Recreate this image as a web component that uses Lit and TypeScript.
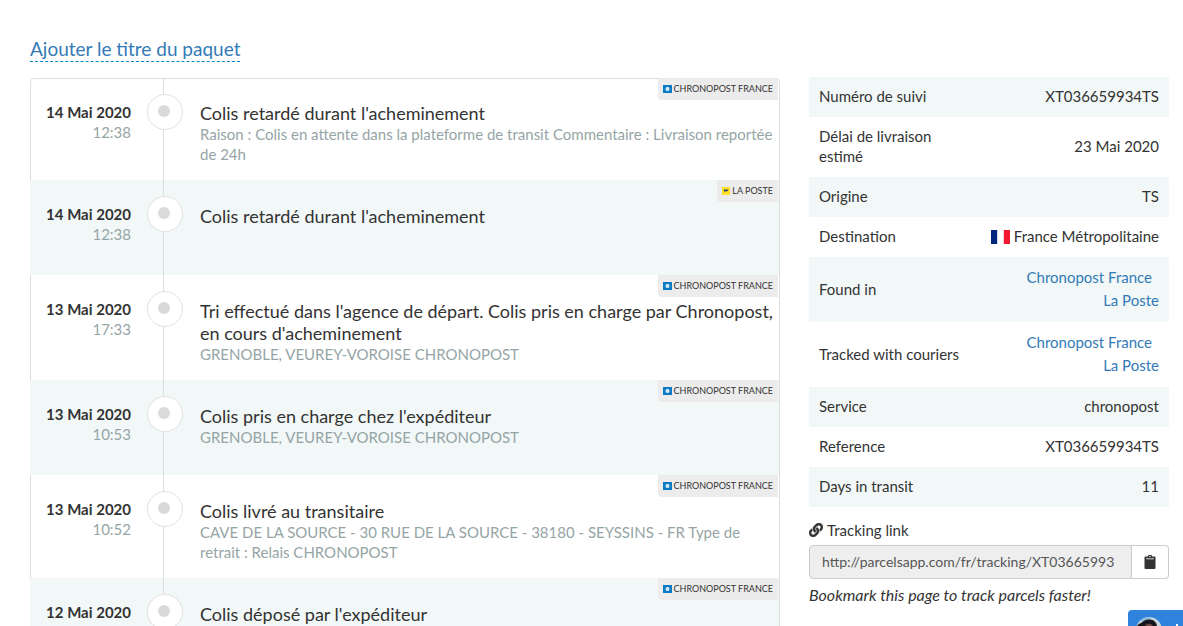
import { LitElement, html, css, svg, nothing } from "lit";
import { customElement } from "lit/decorators.js";

type Carrier = "chronopost" | "laposte";

interface TrackingEvent {
  date: string;
  time: string;
  title: string;
  detail?: string;
  carrier: Carrier;
}

const EVENTS: TrackingEvent[] = [
  {
    date: "14 Mai 2020",
    time: "12:38",
    title: "Colis retardé durant l'acheminement",
    detail:
      "Raison : Colis en attente dans la plateforme de transit Commentaire : Livraison reportée de 24h",
    carrier: "chronopost",
  },
  { date: "14 Mai 2020", time: "12:38", title: "Colis retardé durant l'acheminement", carrier: "laposte" },
  {
    date: "13 Mai 2020",
    time: "17:33",
    title: "Tri effectué dans l'agence de départ. Colis pris en charge par Chronopost, en cours d'acheminement",
    detail: "GRENOBLE, VEUREY-VOROISE CHRONOPOST",
    carrier: "chronopost",
  },
  {
    date: "13 Mai 2020",
    time: "10:53",
    title: "Colis pris en charge chez l'expéditeur",
    detail: "GRENOBLE, VEUREY-VOROISE CHRONOPOST",
    carrier: "chronopost",
  },
  {
    date: "13 Mai 2020",
    time: "10:52",
    title: "Colis livré au transitaire",
    detail: "CAVE DE LA SOURCE - 30 RUE DE LA SOURCE - 38180 - SEYSSINS - FR Type de retrait : Relais CHRONOPOST",
    carrier: "chronopost",
  },
  { date: "12 Mai 2020", time: "", title: "Colis déposé par l'expéditeur", carrier: "chronopost" },
];

const CARRIER_NAMES: Record<Carrier, string> = {
  chronopost: "CHRONOPOST FRANCE",
  laposte: "LA POSTE",
};

const carrierIcon = (carrier: Carrier) =>
  carrier === "chronopost"
    ? html`<svg class="logo" width="9" height="8" viewBox="0 0 9 8" aria-hidden="true">
        <path fill="#0a7ac6" d="M0 0h9v8H0z" />
        <circle cx="4.5" cy="4" r="2" fill="#fff" />
        <path d="M3.2 3.4l1.3.7 1.3-.7M4.5 4.1v1.4" stroke="#6fb2e0" stroke-width=".6" fill="none" />
      </svg>`
    : html`<svg class="logo" width="8" height="8" viewBox="0 0 8 8" aria-hidden="true">
        <path fill="#ffe227" d="M0 0h8v8H0z" />
        <path fill="#2b4a6b" d="M1.8 2.6h4.9L5.4 4.3H3.9L1.6 5.6l1.2-1.5h-.9z" />
      </svg>`;

const marker = html`<svg class="marker" width="36" height="36" viewBox="0 0 36 36" aria-hidden="true">
  <circle cx="18" cy="18" r="17.5" fill="#fff" stroke="#e0e0e0" />
  <circle cx="17" cy="17" r="6" fill="#dadada" />
</svg>`;

const LINK_PATH = svg`<path fill="currentColor" stroke="currentColor" stroke-width="16" d="M326.612 185.391c59.747 59.809 58.927 155.698.36 214.59-.11.12-.24.25-.36.37l-67.2 67.2c-59.27 59.27-155.699 59.262-214.96 0-59.27-59.26-59.27-155.7 0-214.96l37.106-37.106c9.84-9.84 26.786-3.3 27.294 10.606.648 17.722 3.826 35.527 9.69 52.721 1.986 5.822.567 12.262-3.783 16.612l-13.087 13.087c-28.026 28.026-28.905 73.66-1.155 101.96 28.024 28.579 74.086 28.749 102.325.51l67.2-67.19c28.191-28.191 28.073-73.757 0-101.83-3.701-3.694-7.429-6.564-10.341-8.569a16.037 16.037 0 0 1-6.947-12.606c-.396-10.567 3.348-21.456 11.698-29.806l21.054-21.055c5.521-5.521 14.182-6.199 20.584-1.731a152.482 152.482 0 0 1 20.522 17.197zM467.547 44.449c-59.261-59.262-155.69-59.27-214.96 0l-67.2 67.2c-.12.12-.25.25-.36.37-58.566 58.892-59.387 154.781.36 214.59a152.454 152.454 0 0 0 20.521 17.196c6.402 4.468 15.064 3.789 20.584-1.731l21.054-21.055c8.35-8.35 12.094-19.239 11.698-29.806a16.037 16.037 0 0 0-6.947-12.606c-2.912-2.005-6.64-4.875-10.341-8.569-28.073-28.073-28.191-73.639 0-101.83l67.2-67.19c28.239-28.239 74.3-28.069 102.325.51 27.75 28.3 26.872 73.934-1.155 101.96l-13.087 13.087c-4.35 4.35-5.769 10.79-3.783 16.612 5.864 17.194 9.042 34.999 9.69 52.721.509 13.906 17.454 20.446 27.294 10.606l37.106-37.106c59.271-59.259 59.271-155.699.001-214.959z" />`;

@customElement("parcel-timeline")
export class ParcelTimeline extends LitElement {
  static styles = css`
    :host {
      display: block;
    }
    .events {
      margin: 0;
      padding: 0;
      list-style: none;
      border: 1px solid #ddd;
      border-radius: 4px;
    }
    .event {
      position: relative;
      display: grid;
      grid-template-columns: 100px 69px minmax(0, 1fr);
      min-height: 95px;
    }
    .event:first-child {
      margin-top: -1px;
    }
    .event:nth-child(even) {
      background: #f2f8f8;
      box-shadow: -1px 0 0 #f2f8f8;
    }
    .when {
      padding-top: 24px;
      text-align: right;
      line-height: 20px;
    }
    .date {
      display: block;
      font-weight: bold;
    }
    .time,
    .detail {
      color: #95a5a6;
    }
    .rail {
      padding: 16px 0 0 16px;
      background: linear-gradient(#ddd, #ddd) 32px 0 / 1px 100% no-repeat;
    }
    .marker {
      display: block;
    }
    .what {
      padding: 25px 4px 16px 0;
    }
    .event:first-child .what {
      padding-top: 24px;
    }
    .title {
      margin: 0;
      font-size: 18px;
      font-weight: normal;
      line-height: 22px;
    }
    .detail {
      margin: 0;
      line-height: 20px;
    }
    .carrier {
      position: absolute;
      top: 0;
      right: 1px;
      display: flex;
      align-items: center;
      gap: 2px;
      box-sizing: border-box;
      height: 22px;
      padding: 0 5px 1px;
      border-bottom-left-radius: 4px;
      background: #ececec;
      font-size: 9px;
    }
  `;

  render() {
    return html`<ol class="events">
      ${EVENTS.map(
        (e) => html`<li class="event">
          <div class="when"><strong class="date">${e.date}</strong><span class="time">${e.time}</span></div>
          <div class="rail">${marker}</div>
          <div class="what">
            <h2 class="title">${e.title}</h2>
            ${e.detail ? html`<p class="detail">${e.detail}</p>` : nothing}
          </div>
          <span class="carrier">${carrierIcon(e.carrier)}${CARRIER_NAMES[e.carrier]}</span>
        </li>`,
      )}
    </ol>`;
  }
}

@customElement("parcel-summary")
export class ParcelSummary extends LitElement {
  static styles = css`
    :host {
      display: block;
    }
    .facts {
      width: 100%;
      border-collapse: collapse;
      table-layout: fixed;
      line-height: 20px;
    }
    .label,
    .value {
      padding: 9px 10px 11px;
      vertical-align: middle;
      font-weight: normal;
    }
    .label {
      width: 45%;
      box-sizing: border-box;
      text-align: left;
    }
    .value {
      text-align: right;
    }
    .fact:nth-child(odd) {
      background: #f2f8f8;
    }
    .couriers {
      display: flex;
      flex-direction: column;
      align-items: flex-end;
      gap: 3px;
      padding: 1px 0;
    }
    .courier {
      color: #337ab7;
      text-decoration: none;
    }
    .courier:first-child {
      margin-right: 7px;
    }
    .flag {
      margin-right: 4px;
      vertical-align: -2px;
    }
    .share {
      display: flex;
      align-items: center;
      gap: 4px;
      margin: 13px 0 5px;
      line-height: 20px;
    }
    .group {
      display: flex;
      height: 34px;
    }
    .url {
      flex: 1;
      min-width: 0;
      box-sizing: border-box;
      margin: 0;
      padding: 0 12px;
      border: 1px solid #ccc;
      border-radius: 4px 0 0 4px;
      background: #eee;
      color: #555;
      font: inherit;
      font-size: 14px;
    }
    .copy {
      display: flex;
      align-items: center;
      justify-content: center;
      width: 37px;
      padding: 0;
      border: 1px solid #ccc;
      border-left: 0;
      border-radius: 0 4px 4px 0;
      background: #fff;
      color: #333;
    }
    .hint {
      margin: 6px 0 20px;
      font-size: 16px;
      font-style: italic;
      line-height: 20px;
    }
  `;

  private couriers() {
    return html`<div class="couriers">
      <a class="courier" href="#chronopost">Chronopost France</a>
      <a class="courier" href="#laposte">La Poste</a>
    </div>`;
  }

  render() {
    const destination = html`<svg class="flag" width="19" height="14" viewBox="0 0 19 14" aria-hidden="true">
        <path fill="#fff" d="M0 0h19v14H0z" />
        <path fill="#00267f" d="M0 0h6v14H0z" />
        <path fill="#d3d8e6" d="M6 0h1v14H6z" />
        <path fill="#fbd3d8" d="M12 0h1v14h-1z" />
        <path fill="#f31830" d="M13 0h6v14h-6z" /></svg
      >France Métropolitaine`;
    const facts: [string, unknown][] = [
      ["Numéro de suivi", "XT036659934TS"],
      ["Délai de livraison estimé", "23 Mai 2020"],
      ["Origine", "TS"],
      ["Destination", destination],
      ["Found in", this.couriers()],
      ["Tracked with couriers", this.couriers()],
      ["Service", "chronopost"],
      ["Reference", "XT036659934TS"],
      ["Days in transit", "11"],
    ];
    return html`
      <table class="facts">
        <tbody>
          ${facts.map(
            ([label, value]) => html`<tr class="fact">
              <th class="label" scope="row">${label}</th>
              <td class="value">${value}</td>
            </tr>`,
          )}
        </tbody>
      </table>
      <label class="share" for="url">
        <svg width="14" height="14" viewBox="0 0 512 512" aria-hidden="true">${LINK_PATH}</svg>Tracking link
      </label>
      <div class="group">
        <input class="url" id="url" type="text" readonly .value=${"http://parcelsapp.com/fr/tracking/XT03665993"} />
        <button class="copy" type="button" aria-label="Copy">
          <svg width="12" height="14" viewBox="0 0 12 14" aria-hidden="true">
            <path
              fill="currentColor"
              fill-rule="evenodd"
              d="M1.5 1.5H4A2 2 0 0 1 8 1.5h2.5a1 1 0 0 1 1 1V13a1 1 0 0 1-1 1h-9a1 1 0 0 1-1-1V2.5a1 1 0 0 1 1-1zM2.5 3v1.2h7V3h-.8v.5H3.300V3zM6 .8a.7.7 0 1 0 0 1.400A.7.7 0 0 0 6 .8z"
            />
          </svg>
        </button>
      </div>
      <p class="hint">Bookmark this page to track parcels faster!</p>
    `;
  }
}

@customElement("app-root")
export class AppRoot extends LitElement {
  static styles = css`
    :host {
      display: block;
      box-sizing: border-box;
      padding: 38px 14px 0 30px;
      background: #fff;
      color: #333;
      font: 15px/20px Lato, "Open Sans", sans-serif;
    }
    .rename {
      display: inline-block;
      margin-bottom: 15px;
      padding-bottom: 2px;
      border-bottom: 1px dashed #08c;
      color: #337ab7;
      font-size: 19px;
      line-height: 21px;
      text-decoration: none;
      vertical-align: top;
    }
    .columns {
      display: grid;
      grid-template-columns: minmax(0, 25fr) minmax(0, 12fr);
      gap: 29px;
      align-items: start;
    }
    .timeline {
      margin-top: 1px;
    }
    .chat {
      position: fixed;
      right: 0;
      bottom: 0;
      width: 55px;
      height: 16px;
      padding: 0;
      overflow: hidden;
      border: 0;
      border-radius: 4px 0 0 0;
      background: #3083dc;
    }
    .face {
      display: block;
    }
  `;

  render() {
    return html`
      <a class="rename" href="#title">Ajouter le titre du paquet</a>
      <div class="columns">
        <parcel-timeline class="timeline"></parcel-timeline>
        <parcel-summary></parcel-summary>
      </div>
      <button class="chat" type="button" aria-label="Chat">
        <svg class="face" width="55" height="16" viewBox="0 0 55 16" aria-hidden="true">
          <circle cx="21" cy="20" r="13" fill="#c9d6dc" />
          <path fill="#8fb9dd" d="M12 11q5-5 12-3.5l-3 2.5-6 2z" />
          <path fill="#16151c" d="M9 16q2-3 5-3.5 3-3.500 8-3 6 .5 7 6.500z" />
          <path fill="#6b4a45" d="M17 16q1-2.500 4-2.500t4 2.500z" />
          <path fill="#fff" d="M48 14h2v2h-2z" />
        </svg>
      </button>
    `;
  }
}
